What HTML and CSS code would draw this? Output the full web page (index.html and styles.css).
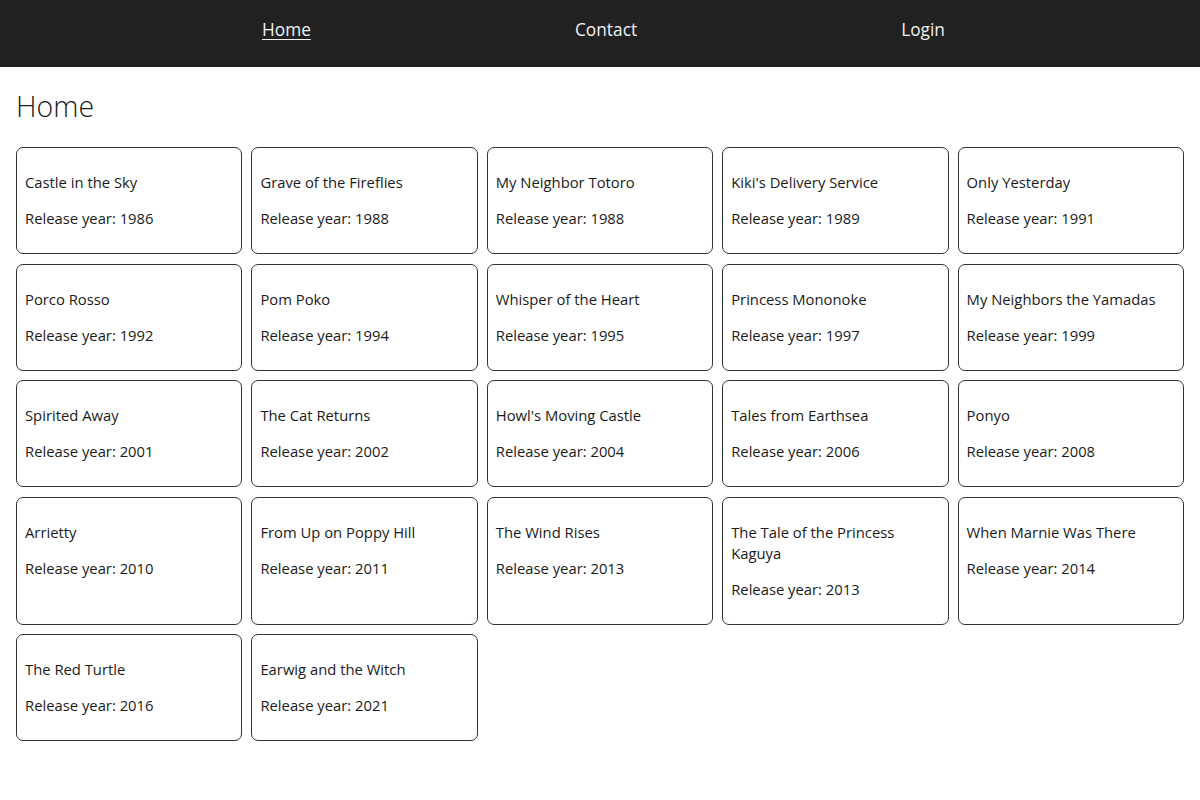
FILE: index.html
```html
<!DOCTYPE html>
<html lang="en">
<head>
<meta charset="utf-8">
<title>Ghibli Films</title>
<link rel="stylesheet" href="styles.css">
</head>
<body>
<nav class="topnav">
  <ul class="nav-list">
    <li><a class="nav-link active" href="#">Home</a></li>
    <li><a class="nav-link" href="#">Contact</a></li>
    <li><a class="nav-link" href="#">Login</a></li>
  </ul>
</nav>
<main class="content">
  <h1 class="page-title">Home</h1>
  <div class="film-grid">
    <div class="film-card"><p class="film-title">Castle in the Sky</p><p class="film-year">Release year: 1986</p></div>
    <div class="film-card"><p class="film-title">Grave of the Fireflies</p><p class="film-year">Release year: 1988</p></div>
    <div class="film-card"><p class="film-title">My Neighbor Totoro</p><p class="film-year">Release year: 1988</p></div>
    <div class="film-card"><p class="film-title">Kiki's Delivery Service</p><p class="film-year">Release year: 1989</p></div>
    <div class="film-card"><p class="film-title">Only Yesterday</p><p class="film-year">Release year: 1991</p></div>
    <div class="film-card"><p class="film-title">Porco Rosso</p><p class="film-year">Release year: 1992</p></div>
    <div class="film-card"><p class="film-title">Pom Poko</p><p class="film-year">Release year: 1994</p></div>
    <div class="film-card"><p class="film-title">Whisper of the Heart</p><p class="film-year">Release year: 1995</p></div>
    <div class="film-card"><p class="film-title">Princess Mononoke</p><p class="film-year">Release year: 1997</p></div>
    <div class="film-card"><p class="film-title">My Neighbors the Yamadas</p><p class="film-year">Release year: 1999</p></div>
    <div class="film-card"><p class="film-title">Spirited Away</p><p class="film-year">Release year: 2001</p></div>
    <div class="film-card"><p class="film-title">The Cat Returns</p><p class="film-year">Release year: 2002</p></div>
    <div class="film-card"><p class="film-title">Howl's Moving Castle</p><p class="film-year">Release year: 2004</p></div>
    <div class="film-card"><p class="film-title">Tales from Earthsea</p><p class="film-year">Release year: 2006</p></div>
    <div class="film-card"><p class="film-title">Ponyo</p><p class="film-year">Release year: 2008</p></div>
    <div class="film-card"><p class="film-title">Arrietty</p><p class="film-year">Release year: 2010</p></div>
    <div class="film-card"><p class="film-title">From Up on Poppy Hill</p><p class="film-year">Release year: 2011</p></div>
    <div class="film-card"><p class="film-title">The Wind Rises</p><p class="film-year">Release year: 2013</p></div>
    <div class="film-card"><p class="film-title">The Tale of the Princess Kaguya</p><p class="film-year">Release year: 2013</p></div>
    <div class="film-card"><p class="film-title">When Marnie Was There</p><p class="film-year">Release year: 2014</p></div>
    <div class="film-card"><p class="film-title">The Red Turtle</p><p class="film-year">Release year: 2016</p></div>
    <div class="film-card"><p class="film-title">Earwig and the Witch</p><p class="film-year">Release year: 2021</p></div>
  </div>
</main>
</body>
</html>
```

FILE: styles.css
```css
* { box-sizing: border-box; }

body {
  margin: 0;
  font-family: "Open Sans", "Liberation Sans", sans-serif;
  color: #1a1a1a;
  background: #fff;
}

.topnav {
  background: #212121;
  height: 67px;
}

.nav-list {
  list-style: none;
  margin: 0;
  padding: 18px 123px 0 130px;
  display: flex;
  justify-content: space-around;
}

.nav-link {
  color: #f2f2f2;
  text-decoration: none;
  font-size: 17.3px;
  line-height: 23.6px;
}

.nav-link.active {
  text-decoration: underline;
  text-underline-offset: 3px;
}

.content {
  padding: 0 16px;
}

.page-title {
  font-weight: 300;
  font-size: 28.5px;
  line-height: 38px;
  margin: 20px 0 22px;
}

.film-grid {
  display: grid;
  grid-template-columns: repeat(5, 1fr);
  gap: 9.5px 9px;
}

.film-card {
  border: 1px solid #333;
  border-radius: 7px;
  padding: 9px 8px;
  font-size: 14.8px;
  line-height: 21px;
}

.film-card p {
  margin: 15px 0;
}
```
